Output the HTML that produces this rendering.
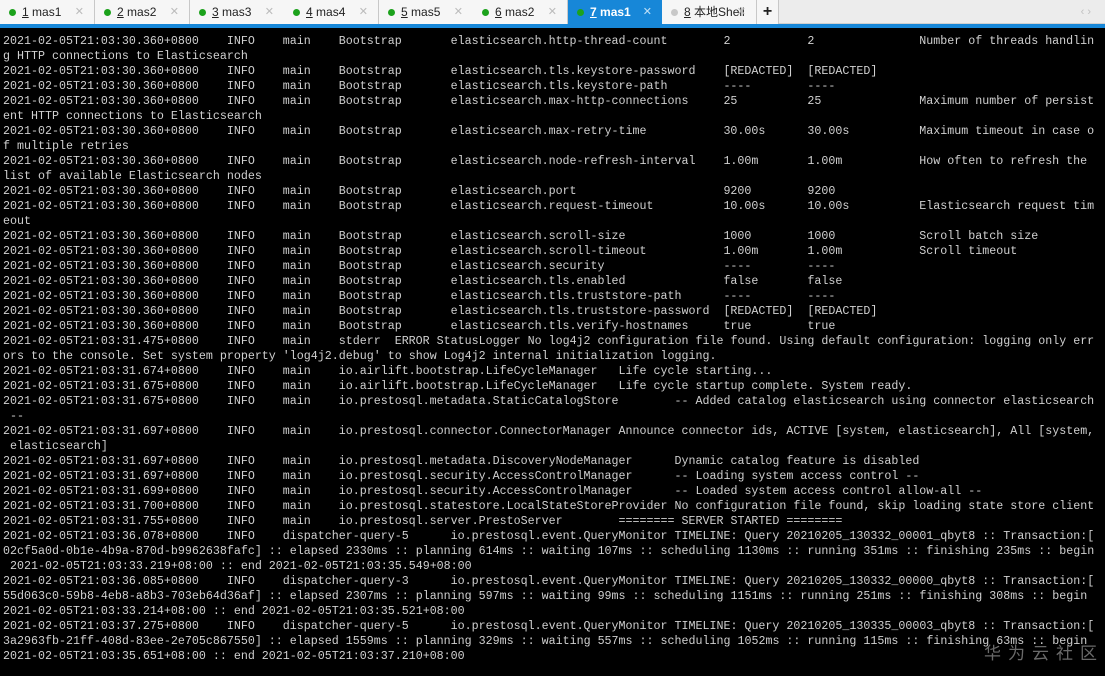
<!DOCTYPE html>
<html><head><meta charset="utf-8"><style>
*{margin:0;padding:0;box-sizing:border-box}
html,body{width:1105px;height:676px;overflow:hidden;background:#000}
#tabs{position:absolute;left:0;top:0;width:1105px;height:24px;background:#ececec;border-bottom:1px solid #d0d0d0;font-family:"Liberation Sans","Noto Sans CJK SC",sans-serif;font-size:12px;color:#222}
.tab{position:absolute;top:0;height:24px;width:95px;border-right:1px solid #c8c8c8;background:#f6f6f6;line-height:24px}
.tab .d{position:absolute;left:9px;top:9px;width:7px;height:7px;border-radius:50%;background:#1ca21c}
.tab .n{position:absolute;left:22px}
.tab .n u{text-decoration:underline}
.tab .x{position:absolute;right:10px;color:#bbb;font-size:11px}
.tab.act{background:#1787d8;color:#fff;font-weight:bold}
.tab.act .x{color:#bfe0f7;font-weight:normal}
#blue{position:absolute;left:0;top:24px;width:1105px;height:4px;background:#1787d8}
pre{position:absolute;left:3px;top:34px;font-family:"Liberation Mono",monospace;font-size:11.67px;line-height:15px;color:#d0d0d0;white-space:pre}
pre span{display:inline-block}
.t{width:32ch}.i{width:8ch}.m{width:8ch}.k{width:16ch}.p{width:39ch}.v{width:12ch}.w{width:16ch}
#wm{position:absolute;left:984px;top:639px;font-family:"Noto Sans CJK SC",sans-serif;font-size:17px;letter-spacing:7px;color:#6a6a6a}
</style></head><body>
<div id="tabs">
<div class="tab" style="left:0"><i class="d"></i><span class="n"><u>1</u> mas1</span><span class="x">✕</span></div>
<div class="tab" style="left:95px"><i class="d"></i><span class="n"><u>2</u> mas2</span><span class="x">✕</span></div>
<div class="tab" style="left:190px"><i class="d"></i><span class="n"><u>3</u> mas3</span><span class="x">✕</span></div>
<div class="tab" style="left:284px"><i class="d"></i><span class="n"><u>4</u> mas4</span><span class="x">✕</span></div>
<div class="tab" style="left:379px"><i class="d"></i><span class="n"><u>5</u> mas5</span><span class="x">✕</span></div>
<div class="tab" style="left:473px"><i class="d"></i><span class="n"><u>6</u> mas2</span><span class="x">✕</span></div>
<div class="tab act" style="left:568px"><i class="d"></i><span class="n"><u>7</u> mas1</span><span class="x">✕</span></div>
<div class="tab" style="left:662px"><i class="d" style="background:#c8c8c8"></i><span class="n"><u>8</u> 本地Shell</span><span class="x">✕</span></div>
<div class="tab" style="left:757px;width:22px;text-align:center;font-size:16px;font-weight:bold">+</div>
<div style="position:absolute;right:14px;top:0;line-height:24px;color:#c0c0c0;font-size:11px">‹ ›</div>
</div>
<div id="blue"></div>
<pre><span class="t">2021-02-05T21:03:30.360+0800</span><span class="i">INFO</span><span class="m">main</span><span class="k">Bootstrap</span><span class="p">elasticsearch.http-thread-count</span><span class="v">2</span><span class="w">2</span>Number of threads handlin
g HTTP connections to Elasticsearch
<span class="t">2021-02-05T21:03:30.360+0800</span><span class="i">INFO</span><span class="m">main</span><span class="k">Bootstrap</span><span class="p">elasticsearch.tls.keystore-password</span><span class="v">[REDACTED]</span><span class="w">[REDACTED]</span>
<span class="t">2021-02-05T21:03:30.360+0800</span><span class="i">INFO</span><span class="m">main</span><span class="k">Bootstrap</span><span class="p">elasticsearch.tls.keystore-path</span><span class="v">----</span><span class="w">----</span>
<span class="t">2021-02-05T21:03:30.360+0800</span><span class="i">INFO</span><span class="m">main</span><span class="k">Bootstrap</span><span class="p">elasticsearch.max-http-connections</span><span class="v">25</span><span class="w">25</span>Maximum number of persist
ent HTTP connections to Elasticsearch
<span class="t">2021-02-05T21:03:30.360+0800</span><span class="i">INFO</span><span class="m">main</span><span class="k">Bootstrap</span><span class="p">elasticsearch.max-retry-time</span><span class="v">30.00s</span><span class="w">30.00s</span>Maximum timeout in case o
f multiple retries
<span class="t">2021-02-05T21:03:30.360+0800</span><span class="i">INFO</span><span class="m">main</span><span class="k">Bootstrap</span><span class="p">elasticsearch.node-refresh-interval</span><span class="v">1.00m</span><span class="w">1.00m</span>How often to refresh the
list of available Elasticsearch nodes
<span class="t">2021-02-05T21:03:30.360+0800</span><span class="i">INFO</span><span class="m">main</span><span class="k">Bootstrap</span><span class="p">elasticsearch.port</span><span class="v">9200</span><span class="w">9200</span>
<span class="t">2021-02-05T21:03:30.360+0800</span><span class="i">INFO</span><span class="m">main</span><span class="k">Bootstrap</span><span class="p">elasticsearch.request-timeout</span><span class="v">10.00s</span><span class="w">10.00s</span>Elasticsearch request tim
eout
<span class="t">2021-02-05T21:03:30.360+0800</span><span class="i">INFO</span><span class="m">main</span><span class="k">Bootstrap</span><span class="p">elasticsearch.scroll-size</span><span class="v">1000</span><span class="w">1000</span>Scroll batch size
<span class="t">2021-02-05T21:03:30.360+0800</span><span class="i">INFO</span><span class="m">main</span><span class="k">Bootstrap</span><span class="p">elasticsearch.scroll-timeout</span><span class="v">1.00m</span><span class="w">1.00m</span>Scroll timeout
<span class="t">2021-02-05T21:03:30.360+0800</span><span class="i">INFO</span><span class="m">main</span><span class="k">Bootstrap</span><span class="p">elasticsearch.security</span><span class="v">----</span><span class="w">----</span>
<span class="t">2021-02-05T21:03:30.360+0800</span><span class="i">INFO</span><span class="m">main</span><span class="k">Bootstrap</span><span class="p">elasticsearch.tls.enabled</span><span class="v">false</span><span class="w">false</span>
<span class="t">2021-02-05T21:03:30.360+0800</span><span class="i">INFO</span><span class="m">main</span><span class="k">Bootstrap</span><span class="p">elasticsearch.tls.truststore-path</span><span class="v">----</span><span class="w">----</span>
<span class="t">2021-02-05T21:03:30.360+0800</span><span class="i">INFO</span><span class="m">main</span><span class="k">Bootstrap</span><span class="p">elasticsearch.tls.truststore-password</span><span class="v">[REDACTED]</span><span class="w">[REDACTED]</span>
<span class="t">2021-02-05T21:03:30.360+0800</span><span class="i">INFO</span><span class="m">main</span><span class="k">Bootstrap</span><span class="p">elasticsearch.tls.verify-hostnames</span><span class="v">true</span><span class="w">true</span>
<span class="t">2021-02-05T21:03:31.475+0800</span><span class="i">INFO</span><span class="m">main</span>stderr  ERROR StatusLogger No log4j2 configuration file found. Using default configuration: logging only err
ors to the console. Set system property 'log4j2.debug' to show Log4j2 internal initialization logging.
<span class="t">2021-02-05T21:03:31.674+0800</span><span class="i">INFO</span><span class="m">main</span>io.airlift.bootstrap.LifeCycleManager   Life cycle starting...
<span class="t">2021-02-05T21:03:31.675+0800</span><span class="i">INFO</span><span class="m">main</span>io.airlift.bootstrap.LifeCycleManager   Life cycle startup complete. System ready.
<span class="t">2021-02-05T21:03:31.675+0800</span><span class="i">INFO</span><span class="m">main</span>io.prestosql.metadata.StaticCatalogStore        -- Added catalog elasticsearch using connector elasticsearch
 --
<span class="t">2021-02-05T21:03:31.697+0800</span><span class="i">INFO</span><span class="m">main</span>io.prestosql.connector.ConnectorManager Announce connector ids, ACTIVE [system, elasticsearch], All [system,
 elasticsearch]
<span class="t">2021-02-05T21:03:31.697+0800</span><span class="i">INFO</span><span class="m">main</span>io.prestosql.metadata.DiscoveryNodeManager      Dynamic catalog feature is disabled
<span class="t">2021-02-05T21:03:31.697+0800</span><span class="i">INFO</span><span class="m">main</span>io.prestosql.security.AccessControlManager      -- Loading system access control --
<span class="t">2021-02-05T21:03:31.699+0800</span><span class="i">INFO</span><span class="m">main</span>io.prestosql.security.AccessControlManager      -- Loaded system access control allow-all --
<span class="t">2021-02-05T21:03:31.700+0800</span><span class="i">INFO</span><span class="m">main</span>io.prestosql.statestore.LocalStateStoreProvider No configuration file found, skip loading state store client
<span class="t">2021-02-05T21:03:31.755+0800</span><span class="i">INFO</span><span class="m">main</span>io.prestosql.server.PrestoServer        ======== SERVER STARTED ========
<span class="t">2021-02-05T21:03:36.078+0800</span><span class="i">INFO</span>dispatcher-query-5      io.prestosql.event.QueryMonitor TIMELINE: Query 20210205_130332_00001_qbyt8 :: Transaction:[
02cf5a0d-0b1e-4b9a-870d-b9962638fafc] :: elapsed 2330ms :: planning 614ms :: waiting 107ms :: scheduling 1130ms :: running 351ms :: finishing 235ms :: begin
 2021-02-05T21:03:33.219+08:00 :: end 2021-02-05T21:03:35.549+08:00
<span class="t">2021-02-05T21:03:36.085+0800</span><span class="i">INFO</span>dispatcher-query-3      io.prestosql.event.QueryMonitor TIMELINE: Query 20210205_130332_00000_qbyt8 :: Transaction:[
55d063c0-59b8-4eb8-a8b3-703eb64d36af] :: elapsed 2307ms :: planning 597ms :: waiting 99ms :: scheduling 1151ms :: running 251ms :: finishing 308ms :: begin
2021-02-05T21:03:33.214+08:00 :: end 2021-02-05T21:03:35.521+08:00
<span class="t">2021-02-05T21:03:37.275+0800</span><span class="i">INFO</span>dispatcher-query-5      io.prestosql.event.QueryMonitor TIMELINE: Query 20210205_130335_00003_qbyt8 :: Transaction:[
3a2963fb-21ff-408d-83ee-2e705c867550] :: elapsed 1559ms :: planning 329ms :: waiting 557ms :: scheduling 1052ms :: running 115ms :: finishing 63ms :: begin
2021-02-05T21:03:35.651+08:00 :: end 2021-02-05T21:03:37.210+08:00</pre>
<div id="wm">华为云社区</div>
</body></html>
